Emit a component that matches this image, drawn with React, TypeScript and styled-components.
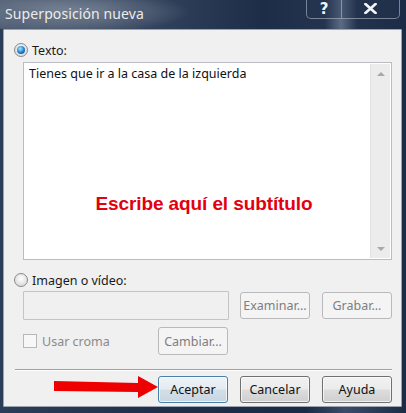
import React from "react";
import styled, { createGlobalStyle } from "styled-components";

const Global = createGlobalStyle`
  html, body { margin: 0; padding: 0; background: #1b2840; }
  body { font-family: "Noto Sans", "Open Sans", sans-serif; }
`;

const Window = styled.div`
  position: relative;
  width: 406px;
  height: 413px;
  display: flex;
  flex-direction: column;
  overflow: hidden;
  background: linear-gradient(90deg, #2c3d58 0%, #1f2f49 40%, #1a2a44 75%, #3a4c68 85%, #1c2b45 100%);
`;

const TitleBar = styled.div`
  height: 29px;
  display: flex;
  align-items: flex-start;
  justify-content: space-between;
  background:
    radial-gradient(ellipse 120px 22px at 70px 12px, rgba(150,160,175,0.75), rgba(120,130,150,0) 100%),
    linear-gradient(90deg, #4c5a70 0%, #34445e 35%, #1e2d47 65%, #24344e 80%, #5b6b84 84%, #22324c 88%, #1d2c46 100%);
`;

const Title = styled.span`
  margin: 4px 0 0 5px;
  font-size: 14px;
  color: #ececec;
  letter-spacing: 0.1px;
  text-shadow: 0 0 6px rgba(60,70,90,0.6);
`;

const CaptionButtons = styled.div`
  display: flex;
  margin: -1px 6px 0 0;
  border: 1px solid rgba(190,200,215,0.55);
  border-top: none;
  border-radius: 0 0 5px 5px;
  height: 19px;
  background: rgba(40,55,80,0.35);
`;

const CaptionButton = styled.div<{ $w: number; $sep?: boolean }>`
  width: ${(p) => p.$w}px;
  height: 19px;
  display: flex;
  align-items: center;
  justify-content: center;
  color: #f4f4f4;
  font-family: "DejaVu Sans", sans-serif;
  font-weight: bold;
  font-size: 15px;
  border-right: ${(p) => (p.$sep ? "1px solid rgba(190,200,215,0.55)" : "none")};
`;

const Panel = styled.div`
  flex: 1;
  margin: 0 4px 6px 3px;
  background: #f0f0f0;
  border: 1px solid #9aa3b0;
  border-radius: 1px;
  display: flex;
  flex-direction: column;
  position: relative;
`;

const OptionRow = styled.div<{ $top: number }>`
  display: flex;
  align-items: center;
  margin: ${(p) => p.$top}px 0 0 10px;
  height: 16px;
  gap: 4px;
  font-size: 12.5px;
  color: #1a1a1a;
`;

const Radio = styled.span<{ $on?: boolean }>`
  width: 14px;
  height: 14px;
  border-radius: 50%;
  border: 1px solid #8a8a8a;
  background: radial-gradient(circle at 50% 40%, #ffffff, #d0d0d0);
  display: flex;
  align-items: center;
  justify-content: center;
  box-sizing: border-box;
  flex: none;
  &::after {
    content: "";
    display: ${(p) => (p.$on ? "block" : "none")};
    width: 8px;
    height: 8px;
    border-radius: 50%;
    background: radial-gradient(circle at 40% 35%, #a8e6ff, #1a7fc9 55%, #0b3a72);
  }
`;

const TextArea = styled.div`
  margin: 4px 0 0 19px;
  width: 369px;
  height: 198px;
  box-sizing: border-box;
  background: #ffffff;
  border: 1px solid #b9bcc2;
  display: flex;
`;

const TextContent = styled.div`
  flex: 1;
  display: flex;
  flex-direction: column;
  padding: 2px 5px;
  font-size: 12.5px;
  color: #111;
`;

const Subtitle = styled.div`
  margin-top: 111px;
  padding-left: 14px;
  text-align: center;
  font-family: "Liberation Sans", Arial, sans-serif;
  font-weight: bold;
  font-size: 19px;
  color: #e3000f;
  letter-spacing: -0.1px;
`;

const ScrollBar = styled.div`
  width: 19px;
  margin: 1px 1px 1px 0;
  background: #ececec;
  border-left: 1px solid #e2e2e2;
  display: flex;
  flex-direction: column;
  justify-content: space-between;
  align-items: center;
  padding: 8px 0 7px;
`;

const Arrow = styled.span<{ $down?: boolean }>`
  width: 0;
  height: 0;
  border-left: 4px solid transparent;
  border-right: 4px solid transparent;
  ${(p) =>
    p.$down ? "border-top: 4px solid #a8a8a8;" : "border-bottom: 4px solid #a8a8a8;"}
`;

const Row = styled.div<{ $top: number }>`
  display: flex;
  align-items: center;
  margin: ${(p) => p.$top}px 0 0 19px;
`;

const Field = styled.div`
  width: 206px;
  height: 29px;
  box-sizing: border-box;
  border: 1px solid #c4c4c4;
  background: #f0f0f0;
  border-radius: 1px;
`;

const Button = styled.div<{ $disabled?: boolean; $default?: boolean; $ml?: number; $h?: number }>`
  width: 70px;
  height: ${(p) => p.$h ?? 27}px;
  box-sizing: border-box;
  margin-left: ${(p) => p.$ml ?? 0}px;
  display: flex;
  align-items: center;
  justify-content: center;
  font-size: 12.5px;
  border-radius: 3px;
  color: ${(p) => (p.$disabled ? "#7e7e7e" : "#111")};
  border: 1px solid ${(p) => (p.$disabled ? "#b9b9b9" : p.$default ? "#4a7fa8" : "#707070")};
  background: ${(p) =>
    p.$disabled
      ? "#f4f4f4"
      : p.$default
      ? "linear-gradient(#eef4f8 0%, #e3ebf1 48%, #d3dfe8 52%, #c8d6e2 100%)"
      : "linear-gradient(#f2f2f2 0%, #ebebeb 48%, #dddddd 52%, #cfcfcf 100%)"};
  box-shadow: ${(p) => (p.$disabled ? "none" : "inset 0 0 0 1px rgba(255,255,255,0.7)")};
`;

const CheckBox = styled.span`
  width: 14px;
  height: 14px;
  box-sizing: border-box;
  border: 1px solid #b8b8b8;
  background: #f7f7f7;
  flex: none;
`;

const CheckLabel = styled.span`
  margin-left: 5px;
  width: 116px;
  font-size: 12.5px;
  color: #8a8a8a;
`;

const Separator = styled.div`
  margin: 14px 9px 0 11px;
  height: 1px;
  background: #a0a0a0;
  border-bottom: 1px solid #ffffff;
`;

const Footer = styled.div`
  display: flex;
  justify-content: flex-end;
  gap: 12px;
  margin: 5px 9px 0 0;
`;

const ArrowOverlay = styled.svg`
  position: absolute;
  left: 52px;
  top: 373px;
`;

export default function App() {
  return (
    <>
      <Global />
      <Window>
        <TitleBar>
          <Title>Superposición nueva</Title>
          <CaptionButtons>
            <CaptionButton $w={34} $sep>?</CaptionButton>
            <CaptionButton $w={57}>
              <svg width="13" height="11" viewBox="0 0 13 11">
                <path d="M1.5 1 L11.5 10 M11.5 1 L1.5 10" stroke="#f4f4f4" strokeWidth="2.6" strokeLinecap="square" />
              </svg>
            </CaptionButton>
          </CaptionButtons>
        </TitleBar>
        <Panel>
          <OptionRow $top={12}>
            <Radio $on />
            <span>Texto:</span>
          </OptionRow>
          <TextArea>
            <TextContent>
              <span>Tienes que ir a la casa de la izquierda</span>
              <Subtitle>Escribe aquí el subtítulo</Subtitle>
            </TextContent>
            <ScrollBar>
              <Arrow />
              <Arrow $down />
            </ScrollBar>
          </TextArea>
          <OptionRow $top={12}>
            <Radio />
            <span>Imagen o vídeo:</span>
          </OptionRow>
          <Row $top={3}>
            <Field />
            <Button $disabled $ml={11}>Examinar...</Button>
            <Button $disabled $ml={12}>Grabar...</Button>
          </Row>
          <Row $top={7}>
            <CheckBox />
            <CheckLabel>Usar croma</CheckLabel>
            <Button $disabled $h={28}>Cambiar...</Button>
          </Row>
          <Separator />
          <Footer>
            <Button $default>Aceptar</Button>
            <Button>Cancelar</Button>
            <Button>Ayuda</Button>
          </Footer>
        </Panel>
        <ArrowOverlay width="108" height="28" viewBox="0 0 108 28">
          <polygon points="2,8 86,10 86,3 106,14 86,25 86,19 2,18" fill="#ee0000" />
        </ArrowOverlay>
      </Window>
    </>
  );
}
